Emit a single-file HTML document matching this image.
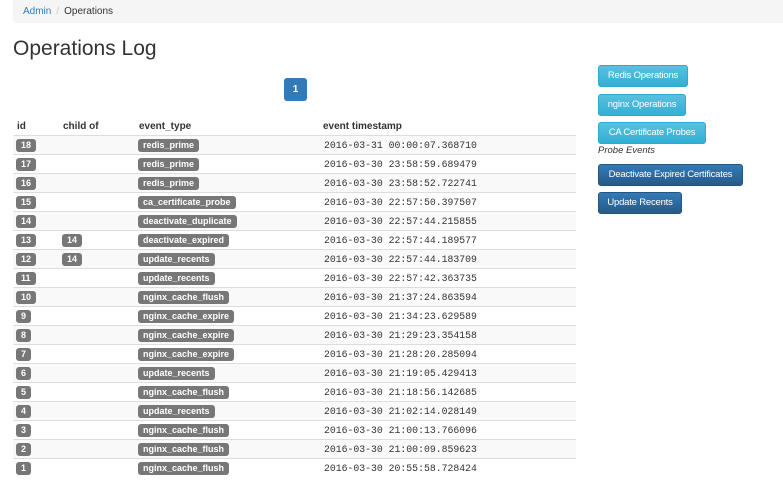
<!DOCTYPE html>
<html><head><style>
body{margin:0;font-family:"Liberation Sans",Arial,sans-serif;color:#333;background:#fff;width:783px;height:502px;overflow:hidden;position:relative}
.bc{position:absolute;left:13px;top:0;width:770px;height:23px;background:#f5f5f5;border-radius:0 0 0 4px;font-size:10px;line-height:23px}
.bc a{color:#337ab7;margin-left:10px}
.bc span{color:#ccc;margin:0 5px}
h1{position:absolute;left:13px;top:37px;margin:0;font-size:21px;font-weight:500}
.pg{position:absolute;left:284px;top:78px;width:23px;height:23px;background:#337ab7;border-radius:3px;color:#fff;font-size:10px;font-weight:bold;text-align:center;line-height:23px}
table{position:absolute;left:13px;top:117px;width:563px;border-collapse:collapse;font-size:10px}
th{text-align:left;font-weight:bold;height:18px;padding:0 4px;border-bottom:1px solid #ddd}
td{height:18px;padding:0 3px;border-top:1px solid #ddd}
td.ts{padding-left:5px}
tr.s td{background:#f9f9f9}
.l{display:inline-block;background:#777;color:#fff;font-weight:bold;font-size:9px;line-height:13px;padding:0 5px;border-radius:3px}
.ts{font-family:"Liberation Mono",monospace;font-size:9.8px}
.btn{position:absolute;left:598px;height:22px;border-radius:3px;color:#fff;font-size:9.5px;letter-spacing:-0.2px;line-height:20px;padding:0;text-align:center;box-sizing:border-box;white-space:nowrap}
.i{background:linear-gradient(#5bc0de,#31b0d5);border:1px solid #2aabd2}
.p{background:linear-gradient(#337ab7,#265a88);border:1px solid #245580}
.pe{position:absolute;left:598px;top:145px;font-size:9.5px;font-style:italic}
</style></head><body>
<div class="bc"><a>Admin</a><span>/</span>Operations</div>
<h1>Operations Log</h1>
<div class="pg">1</div>
<table>
<tr><th style="width:38px">id</th><th style="width:68px">child of</th><th style="width:176px">event_type</th><th>event timestamp</th></tr>
<tr class="s"><td><span class="l">18</span></td><td></td><td><span class="l">redis_prime</span></td><td class="ts">2016-03-31 00:00:07.368710</td></tr>
<tr><td><span class="l">17</span></td><td></td><td><span class="l">redis_prime</span></td><td class="ts">2016-03-30 23:58:59.689479</td></tr>
<tr class="s"><td><span class="l">16</span></td><td></td><td><span class="l">redis_prime</span></td><td class="ts">2016-03-30 23:58:52.722741</td></tr>
<tr><td><span class="l">15</span></td><td></td><td><span class="l">ca_certificate_probe</span></td><td class="ts">2016-03-30 22:57:50.397507</td></tr>
<tr class="s"><td><span class="l">14</span></td><td></td><td><span class="l">deactivate_duplicate</span></td><td class="ts">2016-03-30 22:57:44.215855</td></tr>
<tr><td><span class="l">13</span></td><td><span class="l">14</span></td><td><span class="l">deactivate_expired</span></td><td class="ts">2016-03-30 22:57:44.189577</td></tr>
<tr class="s"><td><span class="l">12</span></td><td><span class="l">14</span></td><td><span class="l">update_recents</span></td><td class="ts">2016-03-30 22:57:44.183709</td></tr>
<tr><td><span class="l">11</span></td><td></td><td><span class="l">update_recents</span></td><td class="ts">2016-03-30 22:57:42.363735</td></tr>
<tr class="s"><td><span class="l">10</span></td><td></td><td><span class="l">nginx_cache_flush</span></td><td class="ts">2016-03-30 21:37:24.863594</td></tr>
<tr><td><span class="l">9</span></td><td></td><td><span class="l">nginx_cache_expire</span></td><td class="ts">2016-03-30 21:34:23.629589</td></tr>
<tr class="s"><td><span class="l">8</span></td><td></td><td><span class="l">nginx_cache_expire</span></td><td class="ts">2016-03-30 21:29:23.354158</td></tr>
<tr><td><span class="l">7</span></td><td></td><td><span class="l">nginx_cache_expire</span></td><td class="ts">2016-03-30 21:28:20.285094</td></tr>
<tr class="s"><td><span class="l">6</span></td><td></td><td><span class="l">update_recents</span></td><td class="ts">2016-03-30 21:19:05.429413</td></tr>
<tr><td><span class="l">5</span></td><td></td><td><span class="l">nginx_cache_flush</span></td><td class="ts">2016-03-30 21:18:56.142685</td></tr>
<tr class="s"><td><span class="l">4</span></td><td></td><td><span class="l">update_recents</span></td><td class="ts">2016-03-30 21:02:14.028149</td></tr>
<tr><td><span class="l">3</span></td><td></td><td><span class="l">nginx_cache_flush</span></td><td class="ts">2016-03-30 21:00:13.766096</td></tr>
<tr class="s"><td><span class="l">2</span></td><td></td><td><span class="l">nginx_cache_flush</span></td><td class="ts">2016-03-30 21:00:09.859623</td></tr>
<tr><td><span class="l">1</span></td><td></td><td><span class="l">nginx_cache_flush</span></td><td class="ts">2016-03-30 20:55:58.728424</td></tr>
</table>
<div class="btn i" style="top:65px;width:90px">Redis Operations</div>
<div class="btn i" style="top:94px;width:88px">nginx Operations</div>
<div class="btn i" style="top:122px;width:108px">CA Certificate Probes</div>
<div class="pe">Probe Events</div>
<div class="btn p" style="top:164px;width:145px">Deactivate Expired Certificates</div>
<div class="btn p" style="top:192px;width:84px">Update Recents</div>
</body></html>
